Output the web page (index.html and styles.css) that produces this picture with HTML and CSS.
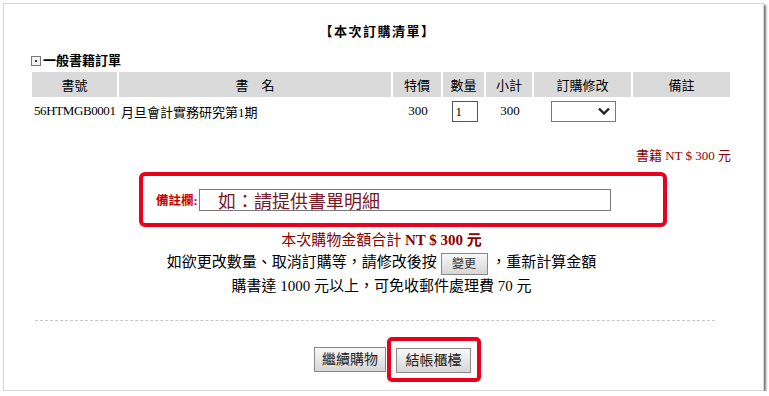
FILE: index.html
```html
<!DOCTYPE html>
<html lang="zh-Hant">
<head>
  <meta charset="UTF-8">
  <meta name="viewport" content="width=device-width, initial-scale=1.0">
  <title>本次訂購清單</title>
  <link rel="stylesheet" href="styles.css">
</head>
<body>
  <div class="frame">
    <div class="title">【本次訂購清單】</div>
    <div class="section"><span class="box-icon"></span>一般書籍訂單</div>
    <table class="order">
      <tr class="head">
        <td class="c1">書號</td>
        <td class="c2">書　名</td>
        <td class="c3">特價</td>
        <td class="c4">數量</td>
        <td class="c5">小計</td>
        <td class="c6">訂購修改</td>
        <td class="c7">備註</td>
      </tr>
      <tr class="row">
        <td class="left code">56HTMGB0001</td>
        <td class="left">月旦會計實務研究第1期</td>
        <td>300</td>
        <td><span class="qty">1</span></td>
        <td>300</td>
        <td>
          <span class="select">
            <svg width="14" height="10" viewBox="0 0 14 10"><path d="M2 2.5 L7 7.5 L12 2.5" fill="none" stroke="#222" stroke-width="2.4"/></svg>
          </span>
        </td>
        <td></td>
      </tr>
    </table>
    <div class="book-total">書籍 NT $ 300 元</div>
    <div class="note-box">
      <span class="note-label">備註欄:</span>
      <span class="note-input">如：請提供書單明細</span>
    </div>
    <div class="summary">
      <div class="sum-line">本次購物金額合計 <b>NT $ 300 元</b></div>
      <div>如欲更改數量、取消訂購等，請修改後按 <span class="btn small">變更</span> ，重新計算金額</div>
      <div>購書達 1000 元以上，可免收郵件處理費 70 元</div>
    </div>
    <div class="divider"></div>
    <div class="actions">
      <span class="btn">繼續購物</span>
      <span class="highlight"><span class="btn">結帳櫃檯</span></span>
    </div>
  </div>
</body>
</html>
```

FILE: styles.css
```css
body {
  margin: 0;
  background-color: #fff;
  font-family: "Liberation Serif", "Noto Sans CJK TC", serif;
  font-size: 13px;
  color: #000;
}
.frame {
  box-sizing: border-box;
  margin: 3px 0 0 3px;
  width: 761px;
  height: 388px;
  padding: 18px 32px 0 28px;
  border: 1px solid #d6d6d6;
  box-shadow: 2px 2px 2px #777;
}
.title {
  text-align: center;
  font-weight: bold;
  letter-spacing: 1.5px;
  line-height: 20px;
  margin-left: -8px;
}
.section {
  display: flex;
  align-items: center;
  margin-top: 10px;
  font-weight: bold;
  line-height: 18px;
  margin-left: -1px;
}
.box-icon {
  position: relative;
  box-sizing: border-box;
  width: 10px;
  height: 10px;
  margin-right: 2px;
  border: 1px solid #777;
  background-color: #f2f2f2;
}
.box-icon::after {
  content: "";
  position: absolute;
  left: 3px;
  top: 3px;
  width: 2px;
  height: 2px;
  background-color: #333;
}
.order {
  border-collapse: separate;
  border-spacing: 0;
  table-layout: fixed;
  width: 698px;
  margin-top: 2px;
}
.order td {
  padding: 0;
  text-align: center;
}
.head td {
  height: 25px;
  background-color: #dadada;
  border-right: 2px solid #fff;
}
.head td:last-child {
  border-right: none;
}
.c1 { width: 85px; }
.c2 { width: 272px; }
.c3 { width: 48px; }
.c4 { width: 41px; }
.c5 { width: 46px; }
.c6 { width: 97px; }
.c7 { width: 97px; }
.row td {
  height: 28px;
}
.row td.left {
  text-align: left;
  padding-left: 2px;
}
.row td.code {
  letter-spacing: -0.4px;
}
.qty {
  display: inline-block;
  box-sizing: border-box;
  width: 26px;
  height: 21px;
  padding-left: 3px;
  border: 1px solid #555;
  text-align: left;
  line-height: 19px;
  vertical-align: middle;
}
.select {
  display: inline-flex;
  align-items: center;
  justify-content: flex-end;
  box-sizing: border-box;
  width: 65px;
  height: 21px;
  padding-right: 4px;
  border: 1px solid #7a7a7a;
  vertical-align: middle;
}
.book-total {
  margin-top: 22px;
  text-align: right;
  line-height: 18px;
  color: #8b0000;
}
.note-box {
  display: flex;
  align-items: center;
  box-sizing: border-box;
  width: 528px;
  height: 55px;
  margin: 7px 0 0 107px;
  padding-left: 13px;
  border: 4px solid #e8001c;
  border-radius: 6px;
}
.note-label {
  width: 43px;
  color: #cc0000;
  font-weight: bold;
  font-size: 12.5px;
  overflow: hidden;
  white-space: nowrap;
}
.note-input {
  box-sizing: border-box;
  width: 412px;
  height: 22px;
  padding-left: 18px;
  border: 1px solid #7a7a7a;
  font-family: "Noto Sans CJK TC", sans-serif;
  font-size: 18px;
  line-height: 20px;
  color: #7b1626;
}
.summary {
  margin-top: 2px;
  text-align: center;
  font-size: 15px;
  line-height: 22px;
}
.sum-line {
  color: #8b0000;
}
.btn {
  display: inline-block;
  box-sizing: border-box;
  height: 25px;
  padding: 0;
  border: 1px solid #888;
  background: linear-gradient(#f8f8f8, #d6d6d6);
  text-align: center;
  line-height: 23px;
  font-size: 14px;
  color: #222;
}
.btn.small {
  height: 22px;
  width: 47px;
  font-size: 12px;
  line-height: 20px;
  color: #333;
  vertical-align: middle;
}
.divider {
  width: 680px;
  margin: 23px 0 0 3px;
  border-top: 1px dashed #c6c6c6;
}
.actions {
  display: flex;
  align-items: center;
  margin-top: 16px;
  padding-left: 282px;
}
.actions > .btn {
  width: 72px;
  margin-right: 1px;
}
.highlight {
  display: inline-flex;
  padding: 7px 6px 5px 5px;
  border: 4px solid #e8001c;
  border-radius: 5px;
}
.highlight .btn {
  width: 75px;
}
```
